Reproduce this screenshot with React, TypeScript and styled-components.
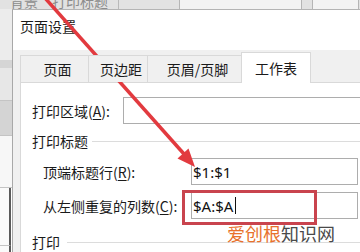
import React from 'react';
import styled, { createGlobalStyle } from 'styled-components';

const Global = createGlobalStyle`
  html, body { margin: 0; padding: 0; }
  body {
    width: 360px;
    height: 252px;
    overflow: hidden;
    background: #ffffff;
    font-family: "Noto Sans CJK SC", "Noto Sans", sans-serif;
  }
`;

const Screen = styled.div`
  position: relative;
  width: 360px;
  height: 252px;
  overflow: hidden;
  display: grid;
  grid-template-rows: 9px 243px;
  grid-template-columns: 12px 348px;
  background: #ffffff;
`;

/* ---------- background: ribbon and sheet ---------- */
const Ribbon = styled.div`
  grid-column: 1 / 3;
  display: flex;
  align-items: flex-end;
  background: #e2e2e2;
  overflow: hidden;
`;

const RibbonLabel = styled.span<{ $left: number }>`
  margin-left: ${(p) => p.$left}px;
  font-size: 14px;
  line-height: 14px;
  margin-bottom: 1px;
  color: #8c8c8c;
  white-space: nowrap;
`;

const RibbonDivider = styled.span<{ $left: number }>`
  align-self: stretch;
  width: 1px;
  margin-left: ${(p) => p.$left}px;
  background: #b9b9b9;
`;

const RibbonBox = styled.span<{ $left: number; $width: number }>`
  align-self: stretch;
  margin-left: ${(p) => p.$left}px;
  width: ${(p) => p.$width}px;
  background: #f3f3f3;
  border-left: 1px solid #b5b5b5;
  border-right: 1px solid #b5b5b5;
  box-sizing: border-box;
`;

const SheetEdge = styled.div`
  display: flex;
  flex-direction: column;
  overflow: hidden;
`;

const SheetBand = styled.div<{ $h: number; $bg: string; $line?: boolean; $grid?: boolean }>`
  height: ${(p) => p.$h}px;
  flex: none;
  background: ${(p) => p.$bg};
  border-bottom: ${(p) => (p.$line ? '1px solid #c4c4c4' : 'none')};
  border-right: ${(p) => (p.$grid ? '2px solid #5a5a5a' : 'none')};
  margin-right: ${(p) => (p.$grid ? '1px' : '0')};
`;

/* ---------- dialog ---------- */
const Dialog = styled.div`
  width: 420px;
  display: flex;
  flex-direction: column;
  background: #f0f0f0;
  border-left: 1px solid #a8a8a8;
  border-top: 1px solid #b4b4b4;
  box-sizing: border-box;
`;

const TitleBar = styled.div`
  height: 40px;
  flex: none;
  background: #ffffff;
  padding: 6px 0 0 7px;
  box-sizing: border-box;
  font-size: 14px;
  line-height: 20px;
  color: #1a1a1a;
`;

const Body = styled.div`
  flex: 1;
  display: flex;
  flex-direction: column;
  padding-left: 7px;
`;

const TabRow = styled.div`
  height: 32px;
  flex: none;
  display: flex;
  align-items: flex-end;
  position: relative;
  z-index: 1;
`;

const Tab = styled.div<{ $w: number; $active?: boolean }>`
  width: ${(p) => p.$w}px;
  height: ${(p) => (p.$active ? 31 : 27)}px;
  margin-bottom: ${(p) => (p.$active ? -1 : 0)}px;
  box-sizing: border-box;
  display: flex;
  align-items: center;
  justify-content: center;
  padding-left: ${(p) => (p.$active ? 0 : 6)}px;
  padding-bottom: ${(p) => (p.$active ? 1 : 0)}px;
  font-size: 14px;
  color: #1a1a1a;
  background: ${(p) => (p.$active ? '#ffffff' : '#f0f0f0')};
  border-top: 1px solid #d9d9d9;
  border-left: 1px solid #d9d9d9;
  border-right: ${(p) => (p.$active ? '1px solid #d9d9d9' : 'none')};
`;

const Panel = styled.div`
  flex: 1;
  background: #ffffff;
  border-top: 1px solid #d9d9d9;
  border-left: 1px solid #d9d9d9;
  display: flex;
  flex-direction: column;
  padding-top: 14px;
`;

const FieldRow = styled.div<{ $indent: number; $label: number; $gap: number }>`
  display: grid;
  grid-template-columns: ${(p) => p.$label}px auto;
  align-items: center;
  height: 27px;
  margin-top: ${(p) => p.$gap}px;
  padding-left: ${(p) => p.$indent}px;
`;

const Label = styled.span`
  font-size: 14px;
  line-height: 20px;
  color: #1a1a1a;
  white-space: nowrap;
`;

const Key = styled.u`
  text-underline-offset: 2px;
`;

const Input = styled.div<{ $w: number }>`
  width: ${(p) => p.$w}px;
  height: 27px;
  box-sizing: border-box;
  border: 1px solid #adadad;
  background: #ffffff;
  display: flex;
  align-items: center;
  padding-left: 1px;
  font-family: "Noto Sans", sans-serif;
  font-size: 15px;
  color: #111111;
`;

const Caret = styled.span`
  display: inline-block;
  width: 1px;
  height: 17px;
  margin-left: 2px;
  background: #111111;
`;

const Section = styled.div<{ $gap: number; $lineGap: number }>`
  display: flex;
  align-items: center;
  height: 20px;
  margin-top: ${(p) => p.$gap}px;
  padding-left: 11px;
  font-size: 14px;
  color: #1a1a1a;
  &::after {
    content: '';
    flex: 1;
    height: 1px;
    margin-left: ${(p) => p.$lineGap}px;
    background: #dcdcdc;
  }
`;

/* ---------- annotations over the screenshot ---------- */
const ArrowLayer = styled.svg`
  position: absolute;
  left: 0;
  top: 0;
  width: 360px;
  height: 252px;
  pointer-events: none;
`;

const Highlight = styled.div`
  position: absolute;
  left: 182px;
  top: 190px;
  width: 135px;
  height: 35px;
  box-sizing: border-box;
  border: 3px solid #c9444e;
`;

const Watermark = styled.div`
  position: absolute;
  left: 227px;
  top: 224px;
  font-size: 18px;
  line-height: 19px;
  white-space: nowrap;
  color: #4a4a4a;
`;

const Accent = styled.span`
  color: #e8712c;
`;

export default function App() {
  return (
    <>
      <Global />
      <Screen>
        <Ribbon>
          <RibbonLabel $left={10}>背景</RibbonLabel>
          <RibbonLabel $left={14}>打印标题</RibbonLabel>
          <RibbonDivider $left={10} />
          <RibbonBox $left={60} $width={123} />
          <RibbonBox $left={10} $width={47} />
        </Ribbon>
        <SheetEdge>
          <SheetBand $h={51} $bg="#ececec" />
          <SheetBand $h={8} $bg="#d5d5d5" />
          <SheetBand $h={32} $bg="#e7e7e7" $line />
          <SheetBand $h={34} $bg="#d4d4d4" $line />
          <SheetBand $h={51} $bg="#f7f7f7" $line />
          <SheetBand $h={57} $bg="#fafafa" $line $grid />
          <SheetBand $h={20} $bg="#fafafa" $grid />
        </SheetEdge>
        <Dialog>
          <TitleBar>页面设置</TitleBar>
          <Body>
            <TabRow>
              <Tab $w={68}>页面</Tab>
              <Tab $w={59}>页边距</Tab>
              <Tab $w={94}>页眉/页脚</Tab>
              <Tab $w={70} $active>
                工作表
              </Tab>
            </TabRow>
            <Panel>
              <FieldRow $indent={11} $label={91} $gap={0}>
                <Label>
                  打印区域(<Key>A</Key>):
                </Label>
                <Input $w={270} />
              </FieldRow>
              <Section $gap={7} $lineGap={4}>
                打印标题
              </Section>
              <FieldRow $indent={22} $label={148} $gap={7}>
                <Label>
                  顶端标题行(<Key>R</Key>):
                </Label>
                <Input $w={167}>$1:$1</Input>
              </FieldRow>
              <FieldRow $indent={22} $label={148} $gap={7}>
                <Label>
                  从左侧重复的列数(<Key>C</Key>):
                </Label>
                <Input $w={167}>
                  $A:$A
                  <Caret />
                </Input>
              </FieldRow>
              <Section $gap={13} $lineGap={7}>
                打印
              </Section>
            </Panel>
          </Body>
        </Dialog>
        <ArrowLayer viewBox="0 0 360 252">
          <line x1="45" y1="-2" x2="184" y2="154" stroke="#e23a3f" strokeWidth="3.5" />
          <polygon points="195,167 177.5,158.5 188.5,148.5" fill="#e23a3f" />
        </ArrowLayer>
        <Highlight />
        <Watermark>
          <Accent>爱创根</Accent>知识网
        </Watermark>
      </Screen>
    </>
  );
}
